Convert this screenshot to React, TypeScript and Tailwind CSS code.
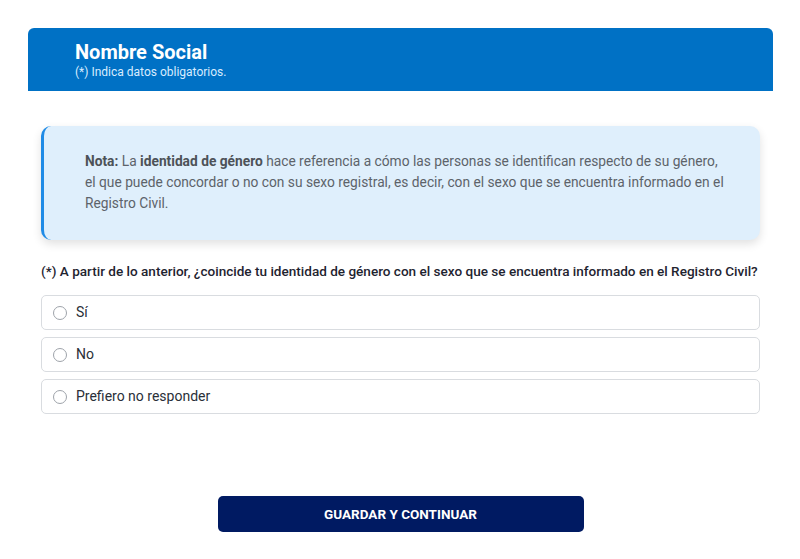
import { useState } from 'react';

// Opciones de respuesta para la pregunta de identidad de género
const opciones = [
  { id: 'si', label: 'Sí' },
  { id: 'no', label: 'No' },
  { id: 'nr', label: 'Prefiero no responder' },
];

const App = () => {
  const [respuesta, setRespuesta] = useState<string | null>(null);

  return (
    <div
      className="min-h-[559px] bg-white pt-[28px] px-[28px] text-[#1f2937]"
      style={{ fontFamily: 'Roboto, "Liberation Sans", sans-serif' }}
    >
      {/* Encabezado del formulario */}
      <div className="w-[745px] h-[63px] bg-[#0071c5] rounded-t-[6px] pl-[47px] pt-[11px]">
        <h2 className="text-[20px] leading-[26px] font-bold text-white">Nombre Social</h2>
        <p className="text-[12px] leading-[14px] text-[#d8ecff]">(*) Indica datos obligatorios.</p>
      </div>

      <div className="w-[745px] px-[13px] pt-[35px]">
        {/* Nota informativa */}
        <div className="bg-[#dfeffc] border-l-[3px] border-[#1f8be6] rounded-[10px] shadow-[0_4px_10px_rgba(0,0,0,0.12)] pl-[41px] pr-[30px] pt-[25px] pb-[26px] text-[13.75px] leading-[21px] text-[#5d636a]">
          <p>
            <span className="font-bold text-[#4d5258]">Nota:</span> La <span className="font-bold text-[#4d5258]">identidad de género</span> hace referencia a cómo las personas se identifican respecto de su género, el que puede concordar o no con su sexo registral, es decir, con el sexo que se encuentra informado en el Registro Civil.
          </p>
        </div>

        <p className="mt-[22px] text-[13.55px] leading-[18px] font-medium text-[#1f2430] whitespace-nowrap">
          (*) A partir de lo anterior, ¿coincide tu identidad de género con el sexo que se encuentra informado en el Registro Civil?
        </p>

        {/* Opciones de respuesta */}
        <div className="mt-[15px] flex flex-col gap-[7px]">
          {opciones.map((op) => (
            <label
              key={op.id}
              className="h-[35px] flex items-center border border-[#d9dce0] rounded-[5px] pl-[11px] cursor-pointer"
            >
              <span
                className={
                  respuesta === op.id
                    ? 'w-[14px] h-[14px] rounded-full border-[4px] border-[#0071c5] bg-white'
                    : 'w-[14px] h-[14px] rounded-full border border-[#9ea3aa] bg-white'
                }
              />
              <input
                type="radio"
                name="coincide"
                className="hidden"
                checked={respuesta === op.id}
                onChange={() => setRespuesta(op.id)}
              />
              <span className="ml-[9px] text-[14px] text-[#2a2f38]">{op.label}</span>
            </label>
          ))}
        </div>

        {/* Acción principal */}
        <div className="flex justify-center mt-[82px]">
          <button className="w-[366px] h-[36px] bg-[#001a62] rounded-[5px] text-white text-[13.5px] font-bold uppercase">
            Guardar y continuar
          </button>
        </div>
      </div>
    </div>
  );
};

export default App;
